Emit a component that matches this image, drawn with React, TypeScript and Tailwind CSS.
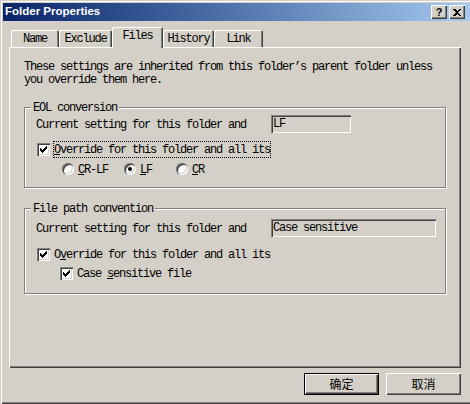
import React from "react";

const mono = "font-['Liberation_Mono','DejaVu_Sans_Mono',monospace] text-[12px] tracking-[-1.2px]";
const sunken =
  "shadow-[inset_1px_1px_0_#808080,inset_2px_2px_0_#404040,inset_-1px_-1px_0_#fff,inset_-2px_-2px_0_#d4d0c8]";
const raised =
  "shadow-[inset_1px_1px_0_#fff,inset_-1px_-1px_0_#404040,inset_-2px_-2px_0_#808080]";

function Check() {
  return (
    <span className={`flex-none w-[13px] h-[13px] bg-white ${sunken}`}>
      <svg width="13" height="13" viewBox="0 0 13 13" shapeRendering="crispEdges">
        <path
          d="M3 5h1v3h-1zM4 6h1v3h-1zM5 7h1v3h-1zM6 6h1v3h-1zM7 5h1v3h-1zM8 4h1v3h-1zM9 3h1v3h-1z"
          fill="#000"
        />
      </svg>
    </span>
  );
}

function Radio({ on }: { on?: boolean }) {
  return (
    <span
      className={`flex-none w-[12px] h-[12px] rounded-full bg-white flex items-center justify-center ${sunken}`}
    >
      {on && <span className="w-[4px] h-[4px] rounded-full bg-black" />}
    </span>
  );
}

function Field({ text, width }: { text: string; width: string }) {
  return (
    <div className={`${width} h-[18px] bg-[#d4d0c8] px-[2px] leading-[19px] ${sunken}`}>{text}</div>
  );
}

function Group({ title, children, className }: { title: string; children: React.ReactNode; className?: string }) {
  return (
    <div className={`border border-[#808080] shadow-[inset_1px_1px_0_#fff,1px_1px_0_#fff] ${className ?? ""}`}>
      <div className="-mt-[7px] ml-[6px] w-fit px-[2px] bg-[#d4d0c8] leading-[14px]">{title}</div>
      {children}
    </div>
  );
}

function Tab({ label, width, active }: { label: string; width: string; active?: boolean }) {
  return (
    <div
      className={`${width} flex justify-center rounded-t-[2px] bg-[#d4d0c8] shadow-[inset_1px_1px_0_#fff,inset_-1px_0_0_#404040,inset_-2px_0_0_#808080] ${
        active ? "relative z-10 h-[21px] -mb-px pt-[3px]" : "h-[17px] pt-[3px]"
      }`}
    >
      <span className="leading-[13px]">{label}</span>
    </div>
  );
}

export default function App() {
  return (
    <div
      className={`w-[470px] h-[404px] bg-[#d4d0c8] pt-[3px] pl-[3px] flex flex-col text-black shadow-[inset_1px_1px_0_#d4d0c8,inset_2px_2px_0_#fff,inset_0_-1px_0_#404040,inset_0_-2px_0_#808080] ${mono}`}
    >
      <div className="h-[18px] flex items-center justify-between pl-[2px] pr-[5px] bg-gradient-to-r from-[#0a246a] to-[#a6caf0]">
        <span className="font-['Liberation_Sans',Arial,sans-serif] font-bold text-[11.5px] tracking-normal text-white">
          Folder Properties
        </span>
        <div className="flex gap-[2px]">
          <div className={`w-[16px] h-[14px] bg-[#d4d0c8] flex items-center justify-center ${raised}`}>
            <span className="font-['Liberation_Sans',Arial,sans-serif] font-bold text-[11px] leading-none tracking-normal">
              ?
            </span>
          </div>
          <div className={`w-[16px] h-[14px] bg-[#d4d0c8] flex items-center justify-center ${raised}`}>
            <svg width="8" height="7" viewBox="0 0 8 7" shapeRendering="crispEdges">
              <path d="M0 0h2l2 2 2-2h2L5 3.5 8 7H6L4 5 2 7H0l3-3.5z" fill="#000" />
            </svg>
          </div>
        </div>
      </div>

      <div className="px-[6px] mt-[7px] w-[464px]">
        <div className="h-[19px] flex items-end pl-[2px]">
          <Tab label="Name" width="w-[48px]" />
          <Tab label="Exclude" width="w-[53px]" />
          <Tab label="Files" width="w-[51px]" active />
          <Tab label="History" width="w-[51px]" />
          <Tab label="Link" width="w-[49px]" />
        </div>

        <div className={`h-[321px] pt-[14px] px-[15px] ${raised}`}>
          <p className="leading-[13px]">
            These settings are inherited from this folder’s parent folder unless
            <br />
            you override them here.
          </p>

          <Group title="EOL conversion" className="mt-[20px]">
            <div className="pl-[11px] pb-[10px]">
              <div className="h-[18px] flex items-center">
                <span className="w-[235px] pt-px">Current setting for this folder and</span>
                <Field text="LF" width="w-[80px]" />
              </div>
              <div className="mt-[8px] h-[16px] flex items-center ml-[1px]">
                <Check />
                <span className="ml-[3px] border border-dotted border-black leading-[14px] pt-px">
                  <u>O</u>verride for this folder and all its
                </span>
              </div>
              <div className="mt-[4px] h-[16px] flex items-center pl-[26px]">
                <div className="w-[62px] flex items-center gap-[4px]">
                  <Radio />
                  <span className="pt-px">
                    <u>C</u>R-LF
                  </span>
                </div>
                <div className="w-[52px] flex items-center gap-[4px]">
                  <Radio on />
                  <span className="pt-px">
                    <u>L</u>F
                  </span>
                </div>
                <div className="flex items-center gap-[4px]">
                  <Radio />
                  <span className="pt-px">
                    <u>C</u>R
                  </span>
                </div>
              </div>
            </div>
          </Group>

          <Group title="File path convention" className="mt-[20px]">
            <div className="pl-[11px] pb-[12px]">
              <div className="mt-[3px] h-[18px] flex items-center">
                <span className="w-[235px] pt-px">Current setting for this folder and</span>
                <Field text="Case sensitive" width="w-[165px]" />
              </div>
              <div className="mt-[9px] h-[16px] flex items-center ml-[1px]">
                <Check />
                <span className="ml-[3px] border border-transparent leading-[14px] pt-px">
                  O<u>v</u>erride for this folder and all its
                </span>
              </div>
              <div className="mt-[3px] h-[16px] flex items-center ml-[24px]">
                <Check />
                <span className="ml-[4px] pt-px">
                  Case <u>s</u>ensitive file
                </span>
              </div>
            </div>
          </Group>
        </div>

        <div className="mt-[5px] flex justify-end gap-[7px] font-['Noto_Sans_CJK_SC',sans-serif] text-[12px] tracking-normal">
          <div className="w-[75px] h-[22px] border border-black bg-[#d4d0c8] flex items-center justify-center shadow-[inset_1px_1px_0_#fff,inset_-1px_-1px_0_#404040,inset_-2px_-2px_0_#808080]">
            确定
          </div>
          <div className={`w-[75px] h-[22px] bg-[#d4d0c8] flex items-center justify-center ${raised}`}>取消</div>
        </div>
      </div>
    </div>
  );
}
